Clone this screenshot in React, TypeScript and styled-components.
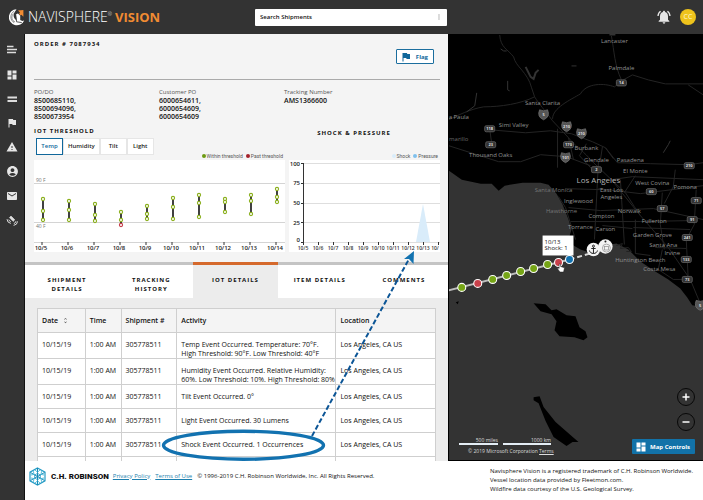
import React from "react";
import styled, { createGlobalStyle } from "styled-components";
import {
  MdAccountCircle,
  MdDashboard,
  MdEmail,
  MdFlag,
  MdMoreVert,
  MdNotificationsActive,
  MdUnfoldMore,
  MdWarning,
} from "react-icons/md";

const GlobalStyle = createGlobalStyle`
  * { box-sizing: border-box; }
  body {
    margin: 0;
    background: #fff;
    color: #111;
    font-family: "Open Sans", "Noto Sans", sans-serif;
    font-size: 7px;
    line-height: 9px;
  }
  button, input { font-family: inherit; }
`;

/* ---------- Shell ---------- */

const Page = styled.div`
  display: grid;
  grid-template-rows: 34px minmax(0, 1fr) 39px;
  height: 100vh;
`;

const Header = styled.header`
  display: grid;
  grid-template-columns: 255fr 192fr 256fr;
  align-items: center;
  background: #333;
`;

const Brand = styled.div`
  display: flex;
  align-items: center;
  gap: 3px;
  padding-left: 9px;
  color: #fff;
  line-height: 18px;
  white-space: nowrap;
`;

const BrandName = styled.span`
  font-size: 14px;
  font-weight: 300;
  sup {
    font-size: 5px;
    line-height: 5px;
    vertical-align: 6px;
  }
`;

const BrandProduct = styled.span`
  color: #f08b32;
  font-size: 13px;
  font-weight: 700;
`;

const SearchBox = styled.label`
  display: flex;
  align-items: center;
  height: 17px;
  padding: 0 4px 0 5px;
  background: #fff;
  border-radius: 1px;
  color: #999;
`;

const SearchInput = styled.input`
  flex: 1;
  min-width: 0;
  padding: 0;
  border: 0;
  outline: 0;
  background: none;
  font-size: 6px;
  font-weight: 600;
  &::placeholder { color: #111; opacity: 1; }
`;

const HeaderActions = styled.div`
  display: flex;
  align-items: center;
  justify-content: flex-end;
  gap: 8px;
  padding-right: 7px;
`;

const IconButton = styled.button`
  display: grid;
  place-items: center;
  padding: 0;
  border: 0;
  background: none;
  color: #e6e6e6;
`;

const Avatar = styled.button`
  width: 16px;
  height: 16px;
  padding: 0;
  border: 0;
  border-radius: 50%;
  background: #eec31c;
  color: #fff8d0;
  font-size: 7px;
  line-height: 16px;
`;

const Body = styled.div`
  display: grid;
  grid-template-columns: 25px 423fr 255fr;
  min-height: 0;
`;

const Sidebar = styled.nav`
  display: flex;
  flex-direction: column;
  align-items: center;
  gap: 12px;
  padding-top: 9px;
  background: #333;
  border-right: 1px solid #111;
`;

const Panel = styled.main`
  position: relative;
  min-width: 0;
  overflow: hidden;
  background: #ececec;
`;

/* ---------- Shipment summary ---------- */

const Summary = styled.section`
  padding: 5px 8px 10px 9px;
  background: #f4f4f4;
  border-bottom: 3px solid #c4c4c4;
`;

const Heading = styled.h2`
  margin: 0;
  font-size: 6px;
  line-height: 10px;
  font-weight: 700;
  letter-spacing: 1px;
`;

const OrderBar = styled.div`
  display: flex;
  justify-content: space-between;
  height: 41px;
  border-bottom: 1px solid #aaa;
`;

const FlagButton = styled.button`
  display: flex;
  align-items: center;
  gap: 4px;
  height: 15px;
  margin: 10px 6px 0 0;
  padding: 0 5px 0 3px;
  border: 1px solid #1b6e9e;
  border-radius: 1px;
  background: #fff;
  color: #10679b;
  font-size: 6px;
  font-weight: 700;
`;

const Facts = styled.dl`
  display: grid;
  grid-template-columns: repeat(3, 125px);
  height: 46px;
  margin: 0;
  padding-top: 8px;
  line-height: 8px;
  dt { color: #555; font-size: 6px; line-height: 9px; }
  dd { margin: 0; font-size: 7px; font-weight: 600; white-space: pre-line; }
`;

const Charts = styled.div`
  display: grid;
  grid-template-columns: 251fr 151fr;
  gap: 4px;
`;

const ChartTop = styled.div<{ $centered?: boolean }>`
  display: flex;
  flex-direction: column;
  height: 27px;
  align-items: ${(p) => (p.$centered ? "center" : "flex-start")};
  padding-top: ${(p) => (p.$centered ? "2px" : "0")};
  padding-right: ${(p) => (p.$centered ? "21px" : "0")};
`;

const Segments = styled.div`
  display: flex;
  flex: none;
  height: 17px;
  margin: 2px 0 0 2px;
`;

const Segment = styled.button<{ $active?: boolean }>`
  min-width: 27px;
  padding: 0 4px;
  border: ${(p) => (p.$active ? "1px solid #10679b" : "1px solid #e6e6e6")};
  background: #fff;
  color: ${(p) => (p.$active ? "#10679b" : "#222")};
  font-size: 6px;
  line-height: 9px;
  font-weight: 600;
`;

const LegendItem = styled.span<{ $color: string }>`
  display: flex;
  align-items: center;
  gap: 1px;
  &::before {
    content: "";
    width: 4px;
    height: 4px;
    border-radius: 50%;
    background: ${(p) => p.$color};
  }
`;

const Legend = styled.div`
  display: flex;
  justify-content: flex-end;
  gap: 3px;
  padding-right: 2px;
  color: #555;
  font-family: Roboto, "Open Sans", sans-serif;
  font-size: 5px;
  line-height: 6px;
`;

const ChartSvg = styled.svg`
  display: block;
  width: 100%;
  margin-top: 1px;
  background: #fff;
  font-size: 6px;
  font-weight: 600;
`;

/* ---------- Tabs and table ---------- */

const Tabs = styled.div`
  display: grid;
  grid-template-columns: repeat(5, minmax(0, 1fr));
  height: 33px;
  padding-right: 2px;
  background: #fff;
`;

const Tab = styled.button<{ $active?: boolean }>`
  display: flex;
  justify-content: center;
  margin-top: -3px;
  padding: 11px 12px 0;
  border: 0;
  border-top: 3px solid ${(p) => (p.$active ? "#d5692c" : "transparent")};
  background: ${(p) => (p.$active ? "#ececec" : "none")};
  color: #111;
  font-size: 6px;
  line-height: 9px;
  font-weight: 700;
  letter-spacing: 1px;
  text-align: center;
`;

const TabLabel = styled.span<{ $wrap?: boolean }>`
  width: ${(p) => (p.$wrap ? "min-content" : "auto")};
  white-space: ${(p) => (p.$wrap ? "normal" : "nowrap")};
`;

const TableArea = styled.section`
  padding: 10px 12px 0;
`;

const Table = styled.table`
  width: 100%;
  table-layout: fixed;
  border-collapse: collapse;
  background: #fff;
  font-size: 7px;
  line-height: 9px;
`;

const Col = styled.col<{ $share: number }>`
  width: ${(p) => p.$share}%;
`;

const HeadCell = styled.th`
  height: 24px;
  padding: 0 4px;
  border: 1px solid #cfcfcf;
  background: #f4f4f4;
  font-weight: 600;
  text-align: left;
  svg { vertical-align: -1px; margin-left: 2px; color: #555; }
`;

const Cell = styled.td`
  padding: 7px 4px 0;
  border: 1px solid #cfcfcf;
  vertical-align: top;
  white-space: pre;
`;

const Row = styled.tr<{ $tall?: boolean }>`
  height: ${(p) => (p.$tall ? "26px" : "24px")};
`;

const Annotation = styled.svg`
  position: absolute;
  top: 0;
  left: 0;
  width: 100%;
  pointer-events: none;
`;

/* ---------- Map ---------- */

const MapPane = styled.section`
  position: relative;
  min-width: 0;
  overflow: hidden;
  background: #333;
  border-bottom: 1px solid #000;
`;

const MapSvg = styled.svg`
  display: block;
  width: 100%;
  height: 100%;
  border-left: 1px solid #000;
`;

const MapTools = styled.div`
  position: absolute;
  right: 8px;
  bottom: 6px;
  display: flex;
  flex-direction: column;
  align-items: flex-end;
  gap: 7px;
`;

const ZoomButton = styled.button`
  width: 18px;
  height: 18px;
  padding: 0;
  border: 1px solid #080808;
  border-radius: 50%;
  background: #333;
  color: #fff;
  display: grid;
  place-items: center;
`;

const MapControls = styled.button`
  display: flex;
  align-items: center;
  gap: 3px;
  height: 15px;
  margin-top: 1px;
  padding: 0 5px 0 3px;
  border: 0;
  border-radius: 1px;
  background: #1272a8;
  color: #fff;
  font-size: 6px;
  font-weight: 700;
  white-space: nowrap;
`;

const ScaleBox = styled.div`
  position: absolute;
  left: 11px;
  bottom: 6px;
  color: #ddd;
  font-size: 5px;
  line-height: 6px;
`;

const ScaleBars = styled.div`
  display: flex;
  gap: 5px;
  margin-bottom: 3px;
`;

const ScaleBar = styled.span<{ $length: number }>`
  width: ${(p) => p.$length}px;
  border-bottom: 2px solid #e4edf5;
  text-align: right;
`;

const MapCredit = styled.div`
  padding-left: 9px;
  a { color: inherit; }
`;

/* ---------- Footer ---------- */

const Footer = styled.footer`
  display: grid;
  grid-template-columns: 25px 465fr 213fr;
  background: #fff;
  font-size: 6px;
  line-height: 9px;
  &::before { content: ""; background: #333; border-right: 1px solid #111; }
`;

const FooterMain = styled.div`
  display: flex;
  align-items: center;
  gap: 5px;
  height: 30px;
  padding-left: 4px;
  white-space: nowrap;
  a { color: #1d7fae; }
`;

const Company = styled.strong`
  margin-right: -1px;
  font-family: Roboto, "Open Sans", sans-serif;
  font-size: 8px;
  font-weight: 900;
`;

const Notice = styled.p`
  margin: 0;
  padding-top: 6px;
  white-space: nowrap;
`;

/* ---------- Data ---------- */

const readings = [
  { day: "10/5", y: [199, 211, 220] },
  { day: "10/6", y: [201, 210, 220] },
  { day: "10/7", y: [204, 215, 221] },
  { day: "10/8", y: [212, 220, 225] },
  { day: "10/9", y: [206, 214, 219] },
  { day: "10/10", y: [198, 207, 219] },
  { day: "10/11", y: [195, 203, 217] },
  { day: "10/12", y: [199, 202, 212] },
  { day: "10/13", y: [195, 201, 214] },
  { day: "10/14", y: [189, 197, 202] },
];

const shockDays = ["10/5", "10/6", "10/7", "10/8", "10/9", "10/10", "10/11", "10/12", "10/13", "10/"];

const events = [
  { text: "Temp Event Occurred. Temperature: 70°F.\nHigh Threshold: 90°F. Low Threshold: 40°F", tall: true },
  { text: "Humidity Event Occurred. Relative Humidity:\n60%. Low Threshold: 10%. High Threshold: 80%", tall: true },
  { text: "Tilt Event Occurred. 0°" },
  { text: "Light Event Occurred. 30 Lumens" },
  { text: "Shock Event Occurred. 1 Occurrences" },
];

const cities: [string, number, number, string?][] = [
  ["Lancaster", 614, 43],
  ["Palmdale", 621, 70],
  ["Santa Clarita", 542, 105],
  ["Simi Valley", 513, 127],
  ["a Paula", 458, 119],
  ["marillo", 458, 141, "#666"],
  ["Thousand Oaks", 490, 157],
  ["Burbank", 586, 150],
  ["Glendale", 596, 162],
  ["Pasadena", 630, 162],
  ["El Monte", 635, 173],
  ["West Covina", 652, 185],
  ["Pomona", 685, 189],
  ["Santa Monica", 553, 192, "#777"],
  ["East Los", 611, 192],
  ["Angeles", 611, 199],
  ["Inglewood", 578, 203],
  ["Hawthorne", 561, 213, "#777"],
  ["Norwalk", 629, 213],
  ["Compton", 601, 218],
  ["Fullerton", 654, 223],
  ["Torrance", 580, 229],
  ["Carson", 605, 231],
  ["Garden Grove", 652, 237],
  ["Santa Ana", 663, 248],
  ["Irvine", 672, 256],
  ["Huntington Beach", 640, 263],
  ["Costa Mesa", 659, 272],
];

const routes: [string, number, number, boolean?][] = [
  ["14", 621, 83],
  ["5", 543, 115, true],
  ["118", 489, 129],
  ["23", 490, 145],
  ["210", 566, 127, true],
  ["210", 581, 134, true],
  ["170", 568, 145],
  ["101", 565, 158, true],
  ["2", 596, 170],
  ["210", 689, 166],
  ["60", 651, 192],
  ["57", 662, 209],
  ["71", 696, 201],
  ["91", 692, 220],
  ["241", 687, 238],
  ["133", 686, 260],
  ["73", 687, 280],
  ["5", 700, 306, true],
];

const GREEN = "#76a516";
const RED = "#c9404a";
const stops: [number, number, string][] = [
  [461, 288, GREEN],
  [477, 284, RED],
  [492, 280, GREEN],
  [506, 276, GREEN],
  [520, 272, GREEN],
  [533, 269, GREEN],
  [547, 265, GREEN],
  [558, 263, RED],
  [569, 260, "#1272b0"],
];

/* ---------- Drawings ---------- */

const NavisphereLogo = () => (
  <svg width="16" height="18" viewBox="0 0 16 18" aria-hidden="true">
    <path d="M7.5 1.2A8 8 0 1 0 15.2 12.4L11.2 13.4A6 6 0 0 1 5.6 4.2Z" fill="#fff" />
    <path d="M5.2 3.2A6.6 6.6 0 0 0 5 14.6M4.6 5.6A5 5 0 0 0 6 14" fill="none" stroke="#444" strokeWidth=".6" />
    <path d="M6.8 6.2L9 5.6L11.2 7.8V12L14.4 13.6A8 8 0 0 1 8 16Z" fill="#fff" />
    <path d="M6.6 5.4L7.6 13.8L12.8 14.6" fill="none" stroke="#333" strokeWidth=".8" />
    <path d="M9 2.6L14.4 2V8.8L12.4 6.8L11.4 7.6L10 5.8L11 4.4Z" fill="#f08b32" />
  </svg>
);

const RobinsonLogo = () => (
  <svg width="17" height="19" viewBox="0 0 17 19" fill="none" aria-hidden="true">
    <path d="M8.5 1L16 5.2V13.8L8.5 18L1 13.8V5.2Z" stroke="#249bc5" strokeWidth="1.2" />
    <path d="M8.5 1V18M1.5 5.5L15.5 13.5M15.5 5.5L1.5 13.5" stroke="#168ab7" strokeWidth="1" />
    <path d="M6 3L8.5 5.2L11 3M6 16L8.5 13.8L11 16M2 8L5 7.4L4.4 4.2M15 8L12 7.4L12.6 4.2M2 11L5 11.6L4.4 14.8M15 11L12 11.6L12.6 14.8" stroke="#45b5d8" strokeWidth=".9" />
    <path d="M8.5 6.3L11.3 8V11L8.5 12.7L5.7 11V8Z" stroke="#249bc5" strokeWidth=".8" />
  </svg>
);

const MenuIcon = () => (
  <svg width="12" height="14" viewBox="0 0 12 14" stroke="#ddd" strokeWidth="1.3">
    <path d="M1 3.5H7.5M1 6.5H11M1 9.5H10" />
  </svg>
);

const BarsIcon = () => (
  <svg width="12" height="12" viewBox="0 0 12 12" stroke="#ddd" strokeWidth="2">
    <path d="M1.5 4.5H11M1.5 8H11" />
  </svg>
);

const SensorIcon = () => (
  <svg width="12" height="12" viewBox="0 0 12 12" fill="none" stroke="#ddd" strokeWidth="1">
    <path d="M3.4 3.6L5 2L8.8 5.8L7.2 7.4ZM5.2 5.4L6.8 3.8" fill="#ddd" strokeWidth=".6" />
    <path d="M1 5.2A4.6 4.6 0 0 0 4.8 9.4M2.8 5.6A2.6 2.6 0 0 0 4.8 7.6M7.8 9.6A3 3 0 0 0 10 7.2M7.6 11.4A4.6 4.6 0 0 0 11.6 7.4" />
  </svg>
);

const navItems: [string, React.ReactNode][] = [
  ["Menu", <MenuIcon />],
  ["Dashboard", <MdDashboard size={12} />],
  ["Shipments", <BarsIcon />],
  ["Flags", <MdFlag size={12} />],
  ["Alerts", <MdWarning size={12} />],
  ["Account", <MdAccountCircle size={13} />],
  ["Messages", <MdEmail size={12} />],
  ["Sensors", <SensorIcon />],
];

const ThresholdChart = () => (
  <ChartSvg viewBox="34 160 251 92" role="img" aria-label="Temperature readings by day">
    <path d="M34 183.5H285M34 222.5H285M34 242.5H285" stroke="#d4d4d4" strokeWidth="1" />
    <g fill="#777" fontSize="5" fontWeight="400">
      <text x="36" y="182">90 F</text>
      <text x="36" y="228">40 F</text>
    </g>
    {readings.map(({ day, y }, i) => {
      const x = 42 + i * 26;
      return (
        <g key={day}>
          <path d={`M${x + 1} ${y[0]}V${y[2]}`} stroke="#111" strokeWidth="1.6" />
          <path d={`M${x} 242V245`} stroke="#333" strokeWidth="1" />
          {y.map((v) => (
            <circle key={v} cx={x + 1} cy={v} r="1.6" fill="#fff" stroke={v > 223 ? "#c43b48" : "#8aaf1c"} strokeWidth="1.1" />
          ))}
          <text x={x - 1} y="250" textAnchor="middle" fill="#222">{day}</text>
        </g>
      );
    })}
  </ChartSvg>
);

const ShockChart = () => (
  <ChartSvg viewBox="289 160 151 92" role="img" aria-label="Shock and pressure by day">
    <path d="M304 163.5H440M304 183.5H440M304 203.5H440M304 222.5H440M304 242.5H440" stroke="#dedede" strokeWidth="1" />
    <path d="M416 242L423 204L430 242Z" fill="#d9ecfa" />
    <path d="M303.5 163V243M301 163.5H304M301 183.5H304M301 203.5H304M301 222.5H304M301 242.5H304" stroke="#333" strokeWidth="1" />
    <g fill="#222" textAnchor="end">
      <text x="300" y="166">100</text>
      <text x="300" y="185">75</text>
      <text x="300" y="205">50</text>
      <text x="300" y="225">25</text>
      <text x="300" y="242">0</text>
    </g>
    {shockDays.map((day, i) => (
      <g key={day}>
        <path d={`M${303.5 + i * 15} 242V245`} stroke="#333" />
        <text x={303 + i * 15 - (day.length === 3 ? 3 : 0)} y="250" fontSize="5" textAnchor="middle" fill="#333">{day}</text>
      </g>
    ))}
  </ChartSvg>
);

const CoastMap = () => (
  <MapSvg viewBox="448 34 255 427" preserveAspectRatio="xMidYMid slice" role="img" aria-label="Shipment route to Los Angeles">
    <path d="M448 34H703V303L698 307L692 306L687 298L680 289L668 280L655 272L640 262L628 250L616 244L604 246L592 254L580 250L573 246L568 240L571 230L568 220L562 205L556 194L548 185L540 183L522 183L504 186L498 191L491 184L480 184L461 180L448 171Z" fill="#000" />
    <path d="M533 304L545 305L551 311L556 310L566 316L575 317L579 328L585 332L587 338L583 341L574 338L559 337L554 331L556 322L551 315L540 312Z" fill="#000" />
    <path d="M533 398L539 397L543 408L555 423L578 443L572 443L566 447L553 438L545 422L538 404L533 401Z" fill="#000" />
    <path d="M455 303L458 302L457 305Z" fill="#000" />
    <g fill="none" stroke="#242424" strokeWidth="1">
      <path d="M499 35C500 48 507 49 513 57C515 67 527 72 531 88L534 97C539 105 544 110 552 121L568 138C576 148 585 153 590 160L611 180L640 216L668 248L690 280L700 304" />
      <path d="M534 97C520 104 500 107 483 107C470 109 456 116 448 120M552 119C552 108 570 100 580 94C586 83 604 83 614 87L623 80L632 75L648 80L665 84H703M611 36C614 52 614 65 621 80M688 85L703 95" />
      <path d="M489 130L525 133L550 131L571 134L592 142L605 148L617 163L650 164L689 165L703 163M489 129L491 144M448 146L470 153L498 162L520 162L540 155L566 157L590 166M557 129V168M568 138L573 160M598 162L594 240M611 180L632 177L703 180M598 189L640 194L680 189L703 186" />
      <path d="M565 189L600 190M620 180L624 245M611 180L625 193L634 207L640 216M558 197L565 208L575 240M568 208L600 211L653 209L703 220M570 222L640 222L692 221M662 193L660 225L664 250M635 220L635 254L650 256M602 226L632 229M624 193L635 176M675 170L673 187L664 204M696 190L694 225L686 240L688 280M655 248L686 249M662 250L658 270L673 280L686 280M633 228L690 230" />
      <path d="M586 144L579 156L592 170M602 147L600 160M605 148L613 159" />
    </g>
    <g fill="none" stroke="#333" strokeWidth="1">
      <path d="M500 49L503 51L506 51M476 93L474 106L466 112M507 81L507 90L509 91M571 66H576M670 141L668 145L663 153" />
      <path d="M525 67L530 77L533 79L535 73L538 70" strokeWidth="2" />
      <path d="M609 34H615" strokeWidth="3" />
    </g>
    <path d="M616 246L622 244L620 249L628 248L631 252L626 252" fill="none" stroke="#222" />
    <g fill="#939393" fontSize="6" textAnchor="middle">
      {cities.map(([name, x, y, color]) => (
        <text key={name} x={x} y={y} fill={color}>{name}</text>
      ))}
      <text x="598" y="183" fontSize="8" fill="#b4b4b4">Los Angeles</text>
    </g>
    {routes.map(([label, x, y, shield]) => (
      <g key={`${label}-${x}`}>
        {shield ? (
          <path d={`M${x - 4} ${y - 5}Q${x} ${y - 3} ${x + 4} ${y - 5}Q${x + 7} ${y + 2} ${x} ${y + 5}Q${x - 7} ${y + 2} ${x - 4} ${y - 5}Z`} fill="#555" stroke="#777" strokeWidth=".7" />
        ) : (
          <rect x={x - 5} y={y - 3} width="10" height="6" rx="1.5" fill="#333" stroke="#555" />
        )}
        <text x={x} y={y + 1.5} fontSize="4" fontWeight="700" fill="#ddd" textAnchor="middle">{label}</text>
      </g>
    ))}
    <path d="M448 291L569 260" stroke="#bcbcbc" strokeWidth="2" />
    <path d="M569 260L593 253" stroke="#d8d8d8" strokeWidth="2" strokeDasharray="5 3" />
    {stops.map(([x, y, color]) => (
      <circle key={x} cx={x} cy={y} r="4" fill={color} stroke="#fff" strokeWidth="1.1" />
    ))}
    <circle cx="593" cy="250" r="6.8" fill="#f4f4f4" />
    <g fill="none" stroke="#222" strokeWidth="1">
      <circle cx="593" cy="246.6" r="1" />
      <path d="M593 247.6V254M590.8 249H595.2M589 251C589.4 253 591 254 593 254C595 254 596.6 253 597 251" />
    </g>
    <circle cx="605" cy="247" r="7.2" fill="#f4f4f4" />
    <circle cx="605" cy="242" r="1" fill="#222" />
    <circle cx="606" cy="248.6" r="4" fill="none" stroke="#aaa" />
    <rect x="604" y="247" width="4" height="3.5" fill="none" stroke="#999" strokeWidth=".8" />
    <path d="M542 236H573V256H542Z" fill="#fff" />
    <g fontSize="6" fill="#111">
      <text x="544" y="244">10/13</text>
      <text x="544" y="251">Shock: 1</text>
    </g>
    <path d="M558.6 264.6V269L557.4 268.4L557 269.2L559.4 272.6H563L564 268.4L560 267V264.6Z" fill="#fff" stroke="#222" strokeWidth=".5" />
  </MapSvg>
);

const tabs = ["Shipment Details", "Tracking History", "IOT Details", "Item Details", "Comments"];

export default function App() {
  return (
    <Page>
      <GlobalStyle />
      <Header>
        <Brand>
          <NavisphereLogo />
          <BrandName>NAVISPHERE<sup>®</sup></BrandName>
          <BrandProduct>VISION</BrandProduct>
        </Brand>
        <SearchBox>
          <SearchInput type="text" placeholder="Search Shipments" aria-label="Search Shipments" />
          <MdMoreVert size={8} />
        </SearchBox>
        <HeaderActions>
          <IconButton aria-label="Notifications"><MdNotificationsActive size={16} /></IconButton>
          <Avatar>CC</Avatar>
        </HeaderActions>
      </Header>

      <Body>
        <Sidebar>
          {navItems.map(([label, icon]) => (
            <IconButton key={label} aria-label={label}>{icon}</IconButton>
          ))}
        </Sidebar>

        <Panel>
          <Summary>
            <OrderBar>
              <Heading>ORDER # 7087934</Heading>
              <FlagButton><MdFlag size={12} />Flag</FlagButton>
            </OrderBar>
            <Facts>
              <div><dt>PO/DO</dt><dd>{"8500685110,\n8500694096,\n8500673954"}</dd></div>
              <div><dt>Customer PO</dt><dd>{"6000654611,\n6000654609,\n6000654609"}</dd></div>
              <div><dt>Tracking Number</dt><dd>AMS1366600</dd></div>
            </Facts>
            <Charts>
              <div>
                <ChartTop>
                  <Heading>IOT THRESHOLD</Heading>
                  <Segments>
                    <Segment $active>Temp</Segment>
                    <Segment>Humidity</Segment>
                    <Segment>Tilt</Segment>
                    <Segment>Light</Segment>
                  </Segments>
                </ChartTop>
                <Legend>
                  <LegendItem $color="#6c9a12">Within threshold</LegendItem>
                  <LegendItem $color="#a3202a">Past threshold</LegendItem>
                </Legend>
                <ThresholdChart />
              </div>
              <div>
                <ChartTop $centered>
                  <Heading>SHOCK &amp; PRESSURE</Heading>
                </ChartTop>
                <Legend>
                  <LegendItem $color="#d9ecfa">Shock</LegendItem>
                  <LegendItem $color="#7fc0ec">Pressure</LegendItem>
                </Legend>
                <ShockChart />
              </div>
            </Charts>
          </Summary>

          <Tabs role="tablist">
            {tabs.map((label, i) => (
              <Tab key={label} role="tab" aria-selected={i === 2} $active={i === 2}>
                <TabLabel $wrap={i < 2}>{label.toUpperCase()}</TabLabel>
              </Tab>
            ))}
          </Tabs>

          <TableArea>
            <Table>
              <colgroup>
                <Col $share={12} />
                <Col $share={9} />
                <Col $share={14} />
                <Col $share={40} />
                <Col $share={25} />
              </colgroup>
              <thead>
                <tr>
                  <HeadCell>Date <MdUnfoldMore size={7} /></HeadCell>
                  <HeadCell>Time</HeadCell>
                  <HeadCell>Shipment #</HeadCell>
                  <HeadCell>Activity</HeadCell>
                  <HeadCell>Location</HeadCell>
                </tr>
              </thead>
              <tbody>
                {events.map(({ text, tall }) => (
                  <Row key={text} $tall={tall}>
                    <Cell>10/15/19</Cell>
                    <Cell>1:00 AM</Cell>
                    <Cell>305778511</Cell>
                    <Cell>{text}</Cell>
                    <Cell>Los Angeles, CA US</Cell>
                  </Row>
                ))}
                <Row><Cell /><Cell /><Cell /><Cell /><Cell /></Row>
              </tbody>
            </Table>
          </TableArea>

          <Annotation viewBox="25 34 423 428" aria-hidden="true">
            <ellipse cx="243.5" cy="445.3" rx="80" ry="14" fill="none" stroke="#1272b0" strokeWidth="3.4" />
            <path d="M312 436L409 259" stroke="#0b5596" strokeWidth="2" strokeDasharray="5 2.5" />
            <path d="M414 251L404 259L409 259L413.5 264Z" fill="#1272b0" />
          </Annotation>
        </Panel>

        <MapPane>
          <CoastMap />
          <ScaleBox>
            <ScaleBars>
              <ScaleBar $length={39}>500 miles</ScaleBar>
              <ScaleBar $length={48}>1000 km</ScaleBar>
            </ScaleBars>
            <MapCredit>© 2019 Microsoft Corporation <a href="#terms">Terms</a></MapCredit>
          </ScaleBox>
          <MapTools>
            <ZoomButton aria-label="Zoom in">
              <svg width="8" height="8" viewBox="0 0 8 8" stroke="#fff" strokeWidth="1.5"><path d="M.5 4H7.5M4 .5V7.5" /></svg>
            </ZoomButton>
            <ZoomButton aria-label="Zoom out">
              <svg width="8" height="8" viewBox="0 0 8 8" stroke="#fff" strokeWidth="1.5"><path d="M.5 4H7.5" /></svg>
            </ZoomButton>
            <MapControls><MdDashboard size={12} />Map Controls</MapControls>
          </MapTools>
        </MapPane>
      </Body>

      <Footer>
        <FooterMain>
          <RobinsonLogo />
          <Company>C.H. ROBINSON</Company>
          <a href="#privacy">Privacy Policy</a>
          <a href="#terms-of-use">Terms of Use</a>
          <span>© 1996-2019 C.H. Robinson Worldwide, Inc. All Rights Reserved.</span>
        </FooterMain>
        <Notice>
          Navisphere Vision is a registered trademark of C.H. Robinson Worldwide.<br />
          Vessel location data provided by Fleetmon.com.<br />
          Wildfire data courtesy of the U.S. Geological Survey.
        </Notice>
      </Footer>
    </Page>
  );
}
